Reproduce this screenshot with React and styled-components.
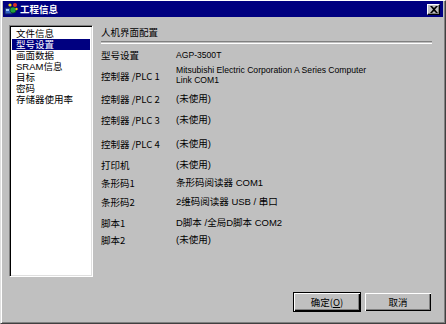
import React from 'react'
import styled, { createGlobalStyle } from 'styled-components'

const GlobalStyle = createGlobalStyle`
  html, body {
    margin: 0;
    padding: 0;
    background: #c0c0c0;
  }
  body {
    font-family: "Liberation Sans", "Noto Sans CJK SC", sans-serif;
    -webkit-font-smoothing: none;
  }
`;

const Window = styled.div`
  width: 446px;
  height: 324px;
  box-sizing: border-box;
  background: #c0c0c0;
  border-top: 1px solid #ffffff;
  border-left: 1px solid #dfdfdf;
  border-right: 1px solid #404040;
  border-bottom: 1px solid #404040;
  box-shadow: inset 1px 0 0 #ffffff, inset -1px -1px 0 #808080;
  display: flex;
  flex-direction: column;
  padding: 0 2px 2px 2px;
`;

const TitleBar = styled.div`
  height: 16px;
  background: #000080;
  display: flex;
  align-items: center;
  padding: 0 2px 0 1px;
`;

const TitleText = styled.span`
  color: #ffffff;
  font-family: "Noto Sans CJK SC", sans-serif;
  font-size: 9.5px;
  font-weight: 700;
  margin-left: 2px;
  flex: 1;
`;

const CloseButton = styled.div`
  width: 13px;
  height: 11px;
  box-sizing: border-box;
  background: #c0c0c0;
  border-top: 1px solid #ffffff;
  border-left: 1px solid #ffffff;
  border-right: 1px solid #000000;
  border-bottom: 1px solid #000000;
  box-shadow: inset -1px -1px 0 #808080;
  display: flex;
  align-items: center;
  justify-content: center;
  margin-right: 1px;
`;

const Body = styled.div`
  flex: 1;
  display: flex;
  flex-direction: column;
  padding: 8px 11px 0 6px;
`;

const Main = styled.div`
  display: flex;
  gap: 8px;
  height: 252px;
`;

const ListBox = styled.div`
  width: 84px;
  box-sizing: border-box;
  background: #ffffff;
  border-top: 1px solid #808080;
  border-left: 1px solid #808080;
  border-right: 1px solid #ffffff;
  border-bottom: 1px solid #ffffff;
  box-shadow: inset 1px 1px 0 #000000, inset -1px -1px 0 #dfdfdf;
  padding: 2px 2px;
`;

const ListItem = styled.div`
  height: 11px;
  line-height: 11px;
  font-family: "Liberation Sans", "Noto Sans CJK SC", sans-serif;
  font-size: 9.5px;
  padding-left: 4px;
  white-space: nowrap;
  color: ${p => (p.$selected ? '#ffffff' : '#000000')};
  background: ${p => (p.$selected ? '#000080' : 'transparent')};
`;

const Panel = styled.div`
  flex: 1;
  display: flex;
  flex-direction: column;
  padding-top: 1px;
`;

const Heading = styled.div`
  font-family: "Noto Sans CJK SC", sans-serif;
  font-size: 9.5px;
  line-height: 12px;
  height: 12px;
`;

const Separator = styled.div`
  height: 1px;
  margin-top: 3px;
  border-top: 1px solid #808080;
  border-bottom: 1px solid #ffffff;
`;

const Row = styled.div`
  display: flex;
  align-items: center;
  margin-top: ${p => p.$gap}px;
  font-size: 9.5px;
`;

const Label = styled.div`
  width: 75px;
  flex: none;
  line-height: 12px;
  white-space: nowrap;
  font-family: "Noto Sans CJK SC", sans-serif;
`;

const Value = styled.div`
  line-height: ${p => (p.$multi ? '9.5px' : '12px')};
  font-family: "Liberation Sans", "Noto Sans CJK SC", sans-serif;
  font-size: ${p => (p.$latin ? '8.6px' : '9.5px')};
  white-space: nowrap;
`;

const Footer = styled.div`
  display: flex;
  justify-content: flex-end;
  gap: 3px;
  margin-top: 15px;
`;

const Button = styled.div`
  width: 68px;
  height: 20px;
  box-sizing: border-box;
  display: flex;
  align-items: center;
  justify-content: center;
  font-family: "Noto Sans CJK SC", sans-serif;
  font-size: 9.5px;
  background: #c0c0c0;
  border: 1px solid ${p => (p.$default ? '#000000' : '#c0c0c0')};
  box-shadow: inset 1px 1px 0 #ffffff, inset -1px -1px 0 #000000, inset -2px -2px 0 #808080;

  u {
    text-decoration: underline;
  }
`;

const AppIcon = () => (
  <svg width="14" height="14" viewBox="0 0 14 14">
    <rect x="1" y="6" width="7" height="6" fill="#3060c0" stroke="#102060" strokeWidth="1" />
    <rect x="2" y="7" width="3" height="2" fill="#a0c8ff" />
    <circle cx="9" cy="8" r="3" fill="#20a040" stroke="#0a5020" strokeWidth="0.8" />
    <circle cx="11" cy="3" r="2" fill="#e03020" />
    <circle cx="6" cy="3" r="1.6" fill="#f0d000" />
    <circle cx="12.5" cy="7" r="1.2" fill="#f0d000" />
  </svg>
);

const CloseGlyph = () => (
  <svg width="8" height="7" viewBox="0 0 8 7">
    <path d="M0 0 L2 0 L4 2 L6 0 L8 0 L5 3.5 L8 7 L6 7 L4 5 L2 7 L0 7 L3 3.5 Z" fill="#000000" />
  </svg>
);

const menuItems = ['文件信息', '型号设置', '画面数据', 'SRAM信息', '目标', '密码', '存储器使用率'];

const unused = '(未使用)';

const rows = [
  { label: '型号设置', value: 'AGP-3500T', latin: true, gap: 5 },
  { label: '控制器 /PLC 1', value: ['Mitsubishi Electric Corporation A Series Computer', 'Link COM1'], latin: true, gap: 5 },
  { label: '控制器 /PLC 2', value: unused, gap: 8 },
  { label: '控制器 /PLC 3', value: unused, gap: 9 },
  { label: '控制器 /PLC 4', value: unused, gap: 12 },
  { label: '打印机', value: unused, gap: 9 },
  { label: '条形码1', value: '条形码阅读器 COM1', gap: 6 },
  { label: '条形码2', value: '2维码阅读器 USB / 串口', gap: 7 },
  { label: '脚本1', value: 'D脚本 /全局D脚本 COM2', gap: 9 },
  { label: '脚本2', value: unused, gap: 5 },
];

const App = () => (
  <>
    <GlobalStyle />
    <Window>
      <TitleBar>
        <AppIcon />
        <TitleText>工程信息</TitleText>
        <CloseButton>
          <CloseGlyph />
        </CloseButton>
      </TitleBar>
      <Body>
        <Main>
          <ListBox>
            {menuItems.map((item, index) => (
              <ListItem key={index} $selected={index === 1}>
                {item}
              </ListItem>
            ))}
          </ListBox>
          <Panel>
            <Heading>人机界面配置</Heading>
            <Separator />
            {rows.map(({ label, value, latin, gap }, index) => (
              <Row key={index} $gap={gap}>
                <Label>{label}</Label>
                {Array.isArray(value) ? (
                  <Value $multi $latin>
                    {value.map(line => (
                      <div key={line}>{line}</div>
                    ))}
                  </Value>
                ) : (
                  <Value $latin={latin}>{value}</Value>
                )}
              </Row>
            ))}
          </Panel>
        </Main>
        <Footer>
          <Button $default>
            确定(<u>O</u>)
          </Button>
          <Button>取消</Button>
        </Footer>
      </Body>
    </Window>
  </>
)

export default App
